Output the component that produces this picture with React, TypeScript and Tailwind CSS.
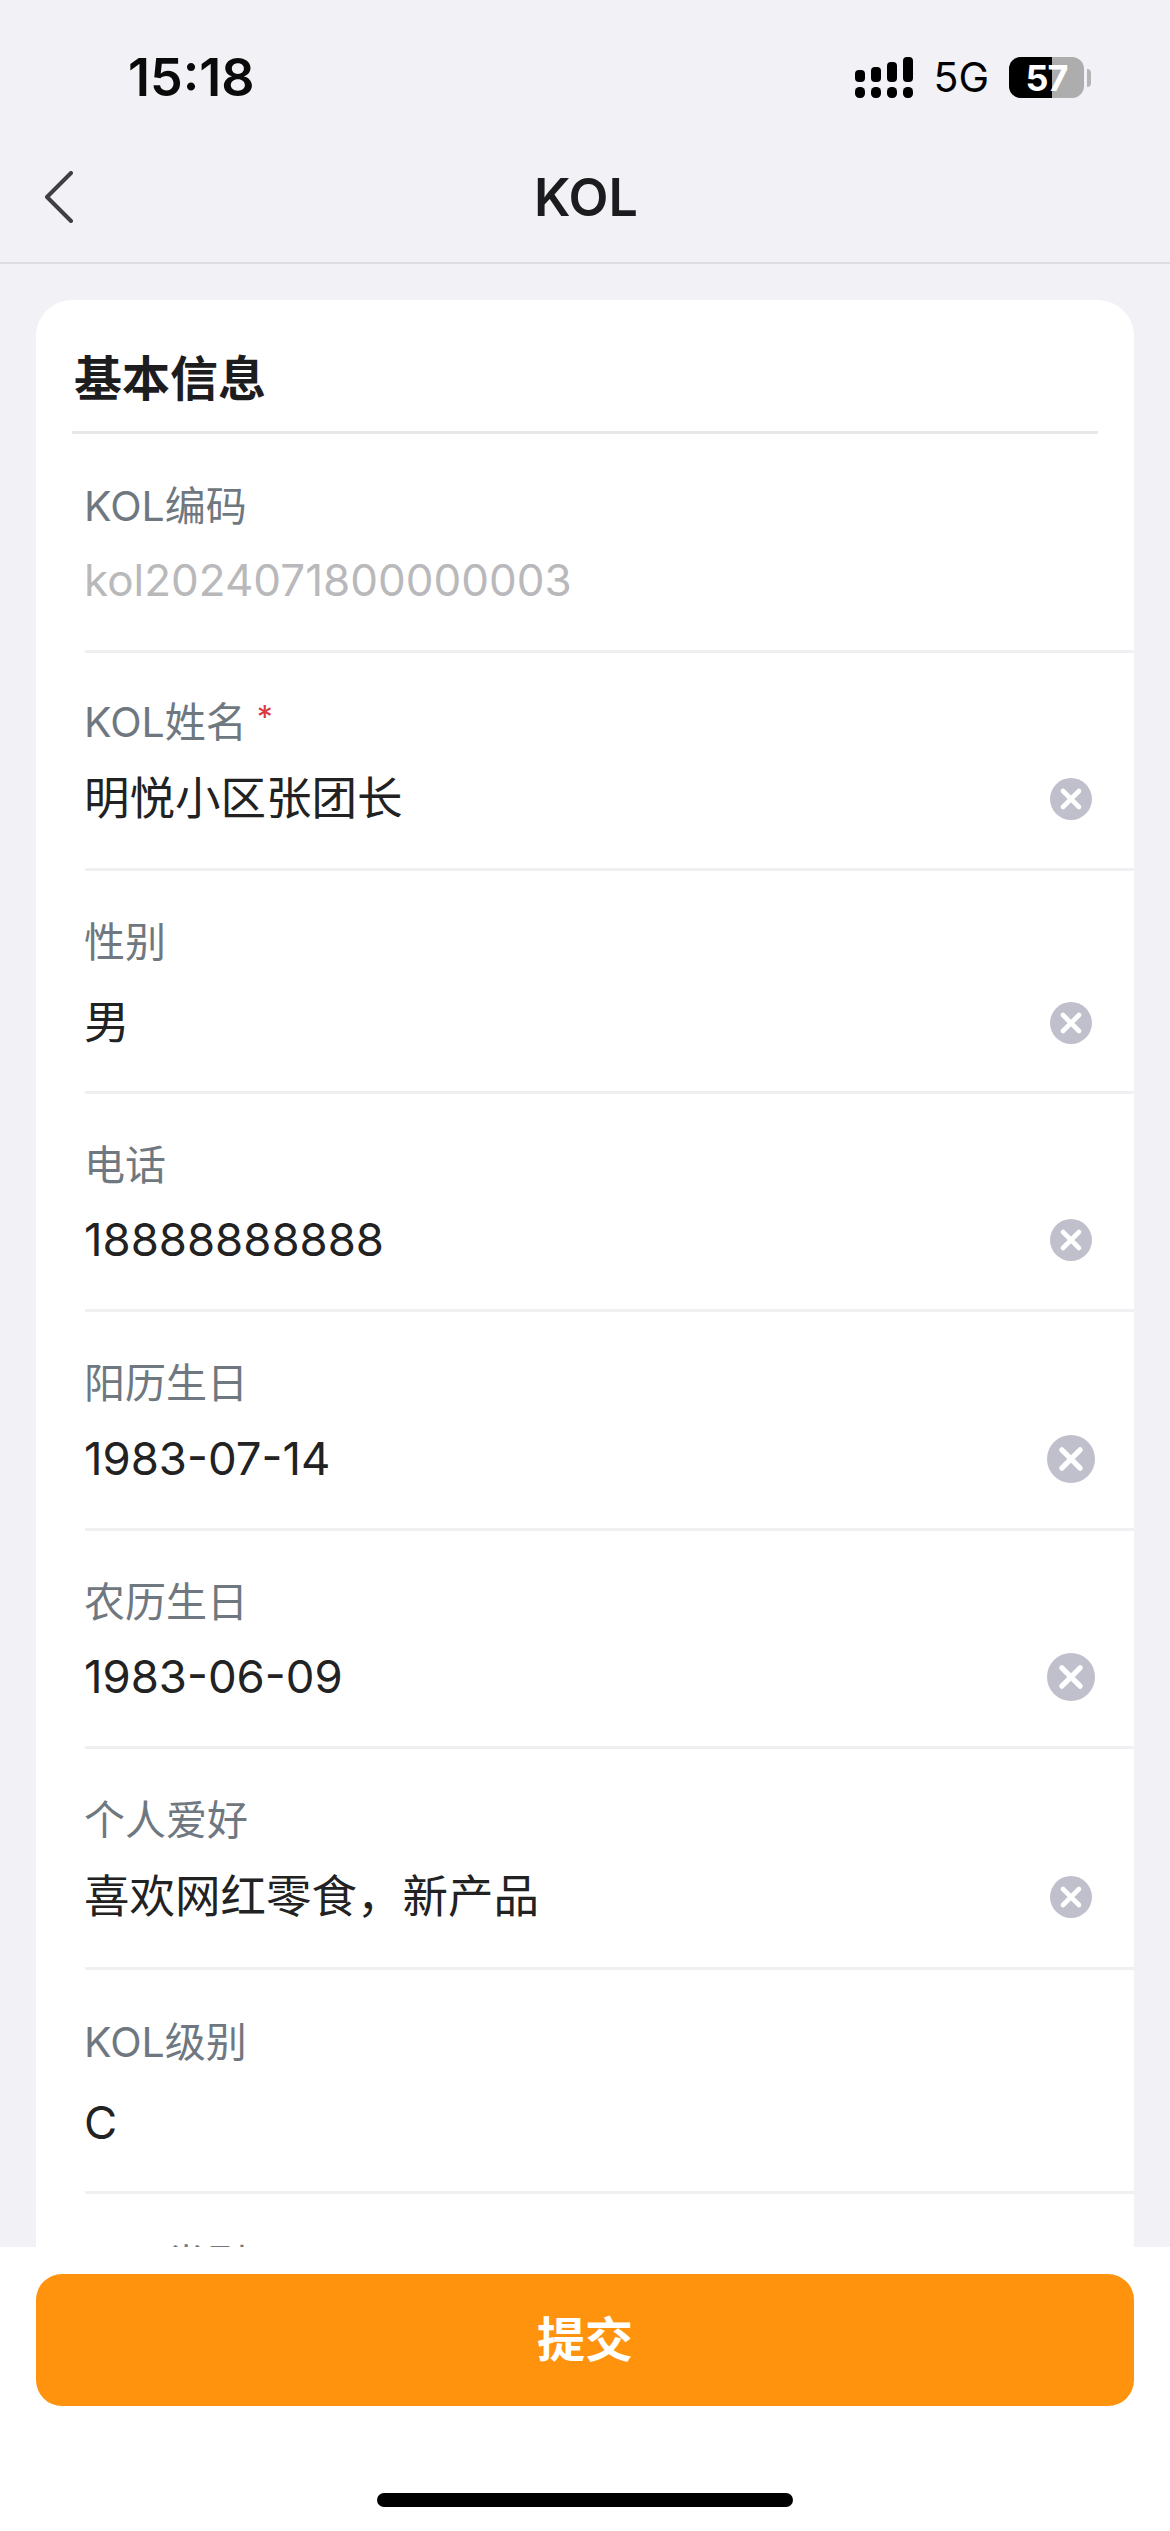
const CJK = '[font-family:Inter,"Noto_Sans_CJK_SC",sans-serif]';

type Field = {
  label: string;
  value: string;
  required?: boolean;
  clear?: 'sm' | 'lg';
  muted?: boolean;
  rowClass: string;
  valueClass: string;
};

const fields: Field[] = [
  { label: 'KOL编码', value: 'kol2024071800000003', muted: true, rowClass: 'h-[219px] pt-[48px]', valueClass: 'mt-[22px]' },
  { label: 'KOL姓名', value: '明悦小区张团长', required: true, clear: 'sm', rowClass: 'h-[218px] pt-[45px]', valueClass: 'mt-[25px]' },
  { label: '性别', value: '男', clear: 'sm', rowClass: 'h-[223px] pt-[47px]', valueClass: 'mt-[29px]' },
  { label: '电话', value: '18888888888', clear: 'sm', rowClass: 'h-[218px] pt-[47px]', valueClass: 'mt-[23px]' },
  { label: '阳历生日', value: '1983-07-14', clear: 'lg', rowClass: 'h-[219px] pt-[47px]', valueClass: 'mt-[24px]' },
  { label: '农历生日', value: '1983-06-09', clear: 'lg', rowClass: 'h-[218px] pt-[47px]', valueClass: 'mt-[23px]' },
  { label: '个人爱好', value: '喜欢网红零食，新产品', clear: 'sm', rowClass: 'h-[221px] pt-[47px]', valueClass: 'mt-[25px]' },
  { label: 'KOL级别', value: 'C', rowClass: 'h-[224px] pt-[48px]', valueClass: 'mt-[29px]' },
];

const ClearIcon = ({ size }: { size: 'sm' | 'lg' }) => (
  <svg className={size === 'lg' ? 'w-[48px] h-[48px]' : 'w-[42px] h-[42px]'} viewBox="0 0 42 42">
    <circle cx="21" cy="21" r="21" fill="#bfc0cc" />
    <path d="M13 13l16 16M29 13L13 29" stroke="#fff" strokeWidth="4.6" strokeLinecap="round" />
  </svg>
);

const SignalIcon = () => (
  <svg className="w-[58px] h-[41px]" viewBox="0 0 58 41" fill="#000">
    <rect x="0" y="13" width="10" height="12" rx="4" />
    <rect x="16" y="10" width="10" height="15" rx="4" />
    <rect x="32" y="5" width="10" height="20" rx="4" />
    <rect x="48" y="0" width="10" height="25" rx="4" />
    <rect x="0" y="30" width="10" height="11" rx="4.5" />
    <rect x="16" y="30" width="10" height="11" rx="4.5" />
    <rect x="32" y="30" width="10" height="11" rx="4.5" />
    <rect x="48" y="30" width="10" height="11" rx="4.5" />
  </svg>
);

const Battery = () => (
  <div className="flex items-center gap-[3px]">
    <div className="relative w-[75px] h-[41px] rounded-[12px] bg-[#adadad] overflow-hidden flex items-center justify-center">
      <div className="absolute left-0 top-0 bottom-0 w-[43px] bg-black" />
      <span className="relative text-white text-[36px] font-bold leading-none tracking-[-1px]">57</span>
    </div>
    <div className="w-[4px] h-[18px] rounded-r-full bg-[#b5b5b5]" />
  </div>
);

const FieldRow = ({ field }: { field: Field }) => (
  <div className={`flex justify-between items-start border-b-[3px] border-[#f0f0f2] pr-[39px] ${field.rowClass}`}>
    <div className="-ml-[1px]">
      <div className="flex items-start text-[41px] leading-[48px] text-[#6f7880]">
        {field.label}
        {field.required && <span className="ml-[10px] text-[32px] leading-[40px] text-[#d9383f]">*</span>}
      </div>
      <div className={`leading-[56px] ${field.muted ? 'text-[44px] text-[#b9b9bb]' : 'text-[45.5px] text-[#222222]'} ${field.valueClass}`}>
        {field.value}
      </div>
    </div>
    {field.clear && (
      <div className={field.valueClass}>
        <div className="h-[48px]" />
        <div className="h-[56px] flex items-center justify-center w-[48px]">
          <ClearIcon size={field.clear} />
        </div>
      </div>
    )}
  </div>
);

export default function App() {
  return (
    <div className={`w-[1170px] h-[2531px] flex flex-col overflow-hidden bg-[#f1f1f6] ${CJK}`}>
      {/* Status bar */}
      <div className="h-[130px] flex items-start justify-between pt-[50px] pl-[128px] pr-[79px] shrink-0">
        <span className="text-[52px] leading-[56px] font-semibold text-[#0a0a0a]">15:18</span>
        <div className="flex items-center gap-[20px] pt-[7px]">
          <SignalIcon />
          <span className="text-[41px] leading-[41px] text-black">5G</span>
          <Battery />
        </div>
      </div>

      {/* Nav */}
      <div className="h-[134px] shrink-0 flex items-center border-b-[2px] border-[#dddde3] pl-[44px] pr-[72px]">
        <svg className="w-[30px] h-[52px] mt-[2px]" viewBox="0 0 30 52" fill="none">
          <path d="M27 2L3 26l24 24" stroke="#3f3f42" strokeWidth="4" strokeLinecap="round" strokeLinejoin="round" />
        </svg>
        <div className="flex-1 text-center text-[52px] leading-[60px] font-semibold text-[#1c1c1e] mt-[4px]">KOL</div>
      </div>

      {/* Form */}
      <div className="flex-1 min-h-0 overflow-hidden pt-[36px] px-[36px]">
        <div className="bg-white rounded-t-[36px]">
          <div className="mx-[36px] h-[134px] flex items-center border-b-[3px] border-[#e8e8ea] pt-[26px]">
            <span className="text-[48px] leading-[60px] font-bold text-[#1d1d1f] pl-[2px]">基本信息</span>
          </div>
          <div className="ml-[49px]">
            {fields.map((field) => (
              <FieldRow key={field.label} field={field} />
            ))}
            <div className="pt-[46px] text-[41px] leading-[48px] text-[#6f7880]">KOL类型</div>
          </div>
        </div>
      </div>

      {/* Footer */}
      <div className="h-[284px] shrink-0 bg-white flex flex-col items-center px-[36px] pt-[27px]">
        <button className="w-full h-[132px] rounded-[26px] bg-[#ff930d] text-white text-[48px] font-semibold">提交</button>
        <div className="mt-[87px] w-[416px] h-[14px] rounded-full bg-black" />
      </div>
    </div>
  );
}
